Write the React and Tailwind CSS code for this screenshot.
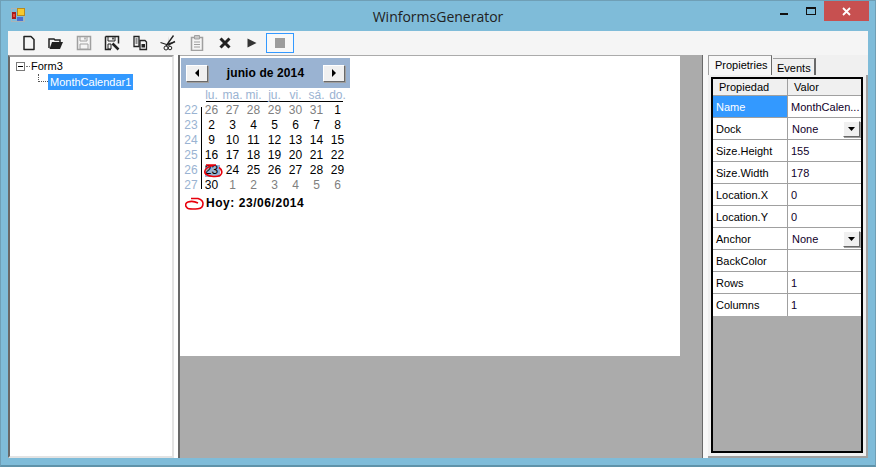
import React from "react";

const FONT = "font-['Liberation_Sans',Arial,sans-serif]";

const WEEKDAYS = ["lu.", "ma.", "mi.", "ju.", "vi.", "sá.", "do."];
const WEEK_NUMBERS = [22, 23, 24, 25, 26, 27];
// muted days belong to the previous / next month
const DAYS = [
  [26, 27, 28, 29, 30, 31].map((d) => ({ d, muted: true })),
  Array.from({ length: 30 }, (_, i) => ({ d: i + 1 })),
  [1, 2, 3, 4, 5, 6].map((d) => ({ d, muted: true })),
].flat();
const SELECTED_INDEX = 28; // june 23rd

const PROPERTIES = [
  { name: "Name", value: "MonthCalen...", selected: true },
  { name: "Dock", value: "None", combo: true },
  { name: "Size.Height", value: "155" },
  { name: "Size.Width", value: "178" },
  { name: "Location.X", value: "0" },
  { name: "Location.Y", value: "0" },
  { name: "Anchor", value: "None", combo: true },
  { name: "BackColor", value: "" },
  { name: "Rows", value: "1" },
  { name: "Columns", value: "1" },
];

const BEVEL =
  "bg-[#f0f0f0] border border-t-white border-l-white border-r-[#696969] border-b-[#696969] shadow-[1px_1px_0_#a0a0a0]";

function Icon({ children, className = "w-4 h-4" }) {
  return (
    <svg viewBox="0 0 16 16" className={className} fill="none">
      {children}
    </svg>
  );
}

function AppIcon() {
  return (
    <svg viewBox="0 0 14 14" className="w-[14px] h-[14px] ml-[4px]">
      <rect x="0.5" y="0.5" width="13" height="13" fill="none" stroke="#a9b4b8" />
      <rect x="6" y="0" width="8" height="8" fill="#b98a1e" />
      <rect x="7" y="1" width="6" height="6" fill="#f5c92e" />
      <rect x="1" y="4" width="4" height="7" fill="#a81c1c" />
      <rect x="2" y="6" width="2" height="3" fill="#e84a3a" />
      <rect x="6" y="9" width="6" height="4" fill="#4a6fd0" />
    </svg>
  );
}

function Toolbar() {
  return (
    <div className="h-[24px] bg-[#f5f5f5] flex items-center pl-[13px] shrink-0">
      {/* new */}
      <Icon>
        <path d="M3 1.5h7l3 3v10H3z" stroke="#222" strokeWidth="1.5" strokeLinejoin="round" />
      </Icon>
      {/* open */}
      <Icon className="w-4 h-4 ml-[11px]">
        <path d="M1 13V4h5l1 1h5v2" stroke="#222" strokeWidth="1.5" />
        <path d="M1.5 14l2.5-7h11l-3 7z" fill="#222" />
      </Icon>
      {/* save, disabled */}
      <Icon className="w-4 h-4 ml-[12px]">
        <path d="M1.5 1.5h13v13h-13z" stroke="#a0a0a0" strokeWidth="1.5" />
        <path d="M4 1.5h7v4.5H4z" stroke="#a0a0a0" />
        <path d="M9 2.5v2" stroke="#a0a0a0" strokeWidth="1.5" />
        <path d="M4 9h8v5H4z" fill="#f5f5f5" stroke="#a0a0a0" />
      </Icon>
      {/* save as */}
      <Icon className="w-4 h-4 ml-[12px]">
        <path d="M1.5 1.5h13v7M7 14.5H1.5v-13" stroke="#222" strokeWidth="1.5" />
        <path d="M4 1.5h7v4.5H4z" stroke="#222" />
        <path d="M9 2.5v2" stroke="#222" strokeWidth="1.5" />
        <path d="M4 9h3v5H4z" stroke="#222" />
        <path d="M8.5 8.5l6 6" stroke="#222" strokeWidth="2.5" />
      </Icon>
      {/* copy */}
      <Icon className="w-4 h-4 ml-[12px]">
        <path d="M2 1.5h5v10H2z" stroke="#222" strokeWidth="1.3" />
        <path d="M3.5 4h2M3.5 6h2M3.5 8h2" stroke="#222" />
        <path d="M8 5.5h5l1.5 1.5v7.5H8z" fill="#f5f5f5" stroke="#222" strokeWidth="1.3" />
        <path d="M9.5 9h3.5v3.5H9.5z" fill="#222" />
      </Icon>
      {/* cut */}
      <Icon className="w-4 h-4 ml-[12px]">
        <path d="M0.5 7.5l9 3M13.5 0.5L6 11" stroke="#222" strokeWidth="1.3" />
        <path d="M9 1l-1 7 7-1-4 2-3 1z" fill="#222" />
        <circle cx="6" cy="13" r="2" stroke="#222" />
        <circle cx="10" cy="13" r="1.8" stroke="#222" />
        <path d="M15 6.5L9 9.5" stroke="#222" strokeWidth="1.5" />
      </Icon>
      {/* paste, disabled */}
      <Icon className="w-4 h-4 ml-[13px]">
        <path d="M2.5 2.5h11v13h-11z" stroke="#a0a0a0" strokeWidth="1.5" />
        <path d="M5.5 0.5h5v3.5h-5z" fill="#c8c8c8" stroke="#a0a0a0" />
        <path d="M5 7h6M5 9.5h6M5 12h6" stroke="#a0a0a0" />
      </Icon>
      {/* delete */}
      <Icon className="w-4 h-4 ml-[12px]">
        <path d="M3.5 3.5l9 9M12.5 3.5l-9 9" stroke="#222" strokeWidth="3" />
      </Icon>
      {/* run */}
      <Icon className="w-4 h-4 ml-[11px]">
        <path d="M3.5 3.5v9l9-4.5z" fill="#333" />
      </Icon>
      {/* stop, hot state */}
      <div className="ml-[6px] w-[28px] h-[20px] border border-[#3399ff] bg-[#f8f8f8] flex items-center justify-center">
        <div className="w-[10px] h-[10px] bg-[#9d9d9d]" />
      </div>
    </div>
  );
}

function ClassicArrowButton({ left }) {
  return (
    <div className={`w-[22px] h-[17px] ${BEVEL} flex items-center justify-center`}>
      <svg viewBox="0 0 6 8" className="w-[6px] h-[8px]">
        <path d={left ? "M5 0v8L1 4z" : "M1 0v8l4-4z"} fill="#000" />
      </svg>
    </div>
  );
}

function Tree() {
  return (
    <div className="w-[166px] bg-white border-l-2 border-t-2 border-l-[#696969] border-t-[#a0a0a0] border-r-2 border-r-[#e3e3e3] border-b-2 border-b-[#e3e3e3] text-[11px] leading-[16px] text-black shrink-0">
      <div className="flex items-center h-[16px] mt-[1px] pl-[6px]">
        <div className="w-[9px] h-[9px] border border-[#7a7a7a] flex items-center justify-center">
          <div className="w-[5px] h-px bg-black" />
        </div>
        <div className="w-[4px] ml-px border-t border-dotted border-[#777]" />
        <span className="ml-px">Form3</span>
      </div>
      <div className="flex h-[16px] pl-[28px]">
        <div className="w-[10px] h-[8px] border-l border-b border-dotted border-[#555]" />
        <span className="bg-[#3399ff] text-white px-[2px] h-[16px]">MonthCalendar1</span>
      </div>
    </div>
  );
}

function MonthCalendar() {
  return (
    <div className="w-[169px] ml-px mt-px text-[12px] leading-[15px]">
      <div className="h-[30px] bg-[#9ab3d2] flex items-center justify-between px-[5px]">
        <ClassicArrowButton left />
        <span className="font-bold tracking-[0.1px] text-black">junio de 2014</span>
        <ClassicArrowButton />
      </div>
      <div className="pl-[20px] pr-[2px] h-[15px]">
        <div className="mx-[5px] border-b border-black h-[14px]">
          <div className="grid grid-cols-7 -mx-[5px] h-[14px] text-[#9ab3d2] text-center">
            {WEEKDAYS.map((w) => (
              <span key={w}>{w}</span>
            ))}
          </div>
        </div>
      </div>
      <div className="flex">
        <div className="w-[20px] text-[#9ab3d2] text-center">
          {WEEK_NUMBERS.map((n) => (
            <div key={n} className="h-[15px]">
              {n}
            </div>
          ))}
        </div>
        <div className="w-px bg-black my-[4px]" />
        <div className="grid grid-cols-7 w-[147px] -ml-px text-center">
          {DAYS.map((day, i) => (
            <div
              key={i}
              className={`h-[15px] relative ${day.muted ? "text-[#808080]" : "text-black"}`}
            >
              {i === SELECTED_INDEX ? (
                <>
                  <div className="absolute left-[4px] top-[2px] w-[15px] h-[12px] bg-[#9ab3d2]" />
                  <span className="relative">{day.d}</span>
                  <svg
                    viewBox="0 0 20 14"
                    className="absolute left-[3px] top-[1px] w-[20px] h-[14px]"
                    fill="none"
                  >
                    <path
                      d="M2 1h10M9 1.500C3 2.500 0 6 1 9c2 3.500 11 4.500 15 2.500 3-2 2-6-1-8"
                      stroke="#e8000c"
                      strokeWidth="1.6"
                    />
                  </svg>
                </>
              ) : (
                day.d
              )}
            </div>
          ))}
        </div>
      </div>
      <div className="flex items-center h-[20px] pl-[4px]">
        <svg viewBox="0 0 19 13" className="w-[19px] h-[13px]" fill="none">
          <path
            d="M6 1.500h7c3 1 5 3 5 5 0 3-2 5-5 5.200-4 .3-10 .3-11-1C0 9 0 6 3 5c3-1 7-.5 10 1"
            stroke="#e8000c"
            strokeWidth="1.6"
          />
        </svg>
        <span className="ml-[2px] font-bold text-black tracking-[0.55px]">Hoy: 23/06/2014</span>
      </div>
    </div>
  );
}

function Designer() {
  return (
    <div className="w-[525px] bg-[#ababab] border-l-2 border-l-[#696969] border-r border-r-[#696969] shrink-0">
      <div className="w-[500px] h-[300px] bg-white mt-px pt-px">
        <MonthCalendar />
      </div>
    </div>
  );
}

function PropertyGrid() {
  return (
    <div className="w-[160px] shrink-0 flex flex-col bg-[#f0f0f0] text-[11px] leading-[16px] text-black">
      <div className="h-[20px] flex items-end shrink-0">
        <div className="w-[64px] h-[20px] bg-[#f8f8f8] border-t border-l border-r border-[#a0a0a0] border-r-[#696969] pl-[6px] pt-px">
          Propietries
        </div>
        <div className="w-[43px] h-[17px] border-t border-r-2 border-[#a0a0a0] border-r-[#696969] pl-[4px] pt-px bg-[#f0f0f0] ml-px">
          Events
        </div>
      </div>
      <div className="flex-1 min-w-0 border-r-2 border-b-2 border-r-[#a0a0a0] border-b-[#a0a0a0] px-[3px] pt-[2px] pb-[3px] flex">
        <div className="flex-1 min-w-0 border-2 border-black bg-[#ababab]">
          <div className="flex h-[17px] bg-[#f0f0f0] border-b border-[#a0a0a0]">
            <div className="w-[75px] pl-[6px] border-r border-[#a0a0a0]">Propiedad</div>
            <div className="pl-[6px]">Valor</div>
          </div>
          {PROPERTIES.map((p) => (
            <div key={p.name} className="flex h-[22px] bg-white border-b border-[#a0a0a0] last:border-b-0">
              <div
                className={`w-[75px] pl-[3px] border-r border-[#a0a0a0] flex items-center ${
                  p.selected ? "bg-[#3399ff] text-white" : ""
                }`}
              >
                {p.name}
              </div>
              <div className="flex-1 min-w-0 flex items-center justify-between pl-[3px] pr-[1px] text-[#10002a]">
                <span className={p.combo ? "pl-px" : ""}>{p.value}</span>
                {p.combo && (
                  <div className={`w-[17px] h-[16px] ${BEVEL} flex items-center justify-center`}>
                    <svg viewBox="0 0 7 4" className="w-[7px] h-[4px]">
                      <path d="M0 0h7L3.5 4z" fill="#000" />
                    </svg>
                  </div>
                )}
              </div>
            </div>
          ))}
        </div>
      </div>
    </div>
  );
}

export default function App() {
  return (
    <div className={`w-[876px] h-[467px] flex flex-col overflow-hidden bg-[#7fbcd9] border border-[#6f9fb6] border-b-2 border-b-[#5f93aa] ${FONT}`}>
      {/* title bar */}
      <div className="h-[30px] shrink-0 grid grid-cols-[1fr_auto_1fr] pl-[6px] pr-[6px]">
        <div className="pt-[7px]">
          <AppIcon />
        </div>
        <div className="pt-[6px] text-[14px] leading-[20px] text-[#222] font-['Open_Sans',sans-serif]">
          WinformsGenerator
        </div>
        <div className="flex justify-end items-start">
          <div className="w-[8px] h-[2px] bg-[#111] mt-[12px] mr-[18px]" />
          <div className="w-[10px] h-[8px] border border-t-2 border-[#111] mt-[6px] mr-[8px]" />
          <div className="w-[45px] h-[20px] bg-[#c75050] flex items-center justify-center">
            <svg viewBox="0 0 9 9" className="w-[9px] h-[9px]" fill="none">
              <path d="M1 1l7 7M8 1l-7 7" stroke="#fff" strokeWidth="1.8" />
            </svg>
          </div>
        </div>
      </div>
      {/* client area */}
      <div className="flex-1 mx-[7px] mb-[7px] bg-white flex flex-col min-h-0">
        <Toolbar />
        <div className="flex-1 flex min-h-0">
          <Tree />
          <div className="w-[4px] bg-white shrink-0" />
          <Designer />
          <div className="w-[5px] bg-[#f8f8f8] shrink-0" />
          <PropertyGrid />
        </div>
      </div>
    </div>
  );
}
